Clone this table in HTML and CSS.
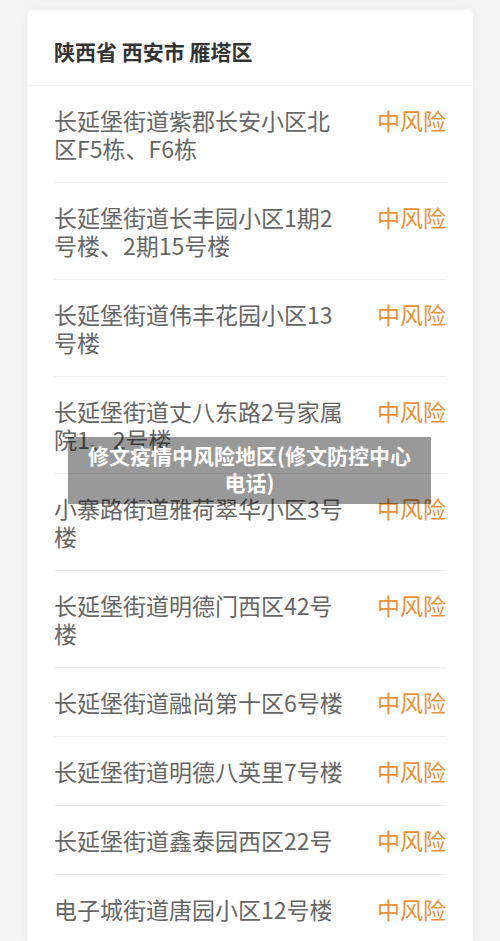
FILE: index.html
```html
<!DOCTYPE html>
<html lang="zh-CN">
<head>
  <meta charset="UTF-8" />
  <meta name="viewport" content="width=device-width, initial-scale=1" />
  <title>修文疫情中风险地区</title>
  <link rel="stylesheet" href="styles.css">
</head>
<body>
  <div class="card">
    <div class="card-head">陕西省 西安市 雁塔区</div>

    <ul class="list">
      <li class="row">
        <span class="place">长延堡街道紫郡长安小区北区F5栋、F6栋</span>
        <span class="risk">中风险</span>
      </li>
      <li class="row">
        <span class="place">长延堡街道长丰园小区1期2号楼、2期15号楼</span>
        <span class="risk">中风险</span>
      </li>
      <li class="row">
        <span class="place">长延堡街道伟丰花园小区13号楼</span>
        <span class="risk">中风险</span>
      </li>
      <li class="row">
        <span class="place">长延堡街道丈八东路2号家属院1、2号楼</span>
        <span class="risk">中风险</span>
      </li>
      <li class="row">
        <span class="place">小寨路街道雅荷翠华小区3号楼</span>
        <span class="risk">中风险</span>
      </li>
      <li class="row">
        <span class="place">长延堡街道明德门西区42号楼</span>
        <span class="risk">中风险</span>
      </li>
      <li class="row">
        <span class="place">长延堡街道融尚第十区6号楼</span>
        <span class="risk">中风险</span>
      </li>
      <li class="row">
        <span class="place">长延堡街道明德八英里7号楼</span>
        <span class="risk">中风险</span>
      </li>
      <li class="row">
        <span class="place">长延堡街道鑫泰园西区22号</span>
        <span class="risk">中风险</span>
      </li>
      <li class="row">
        <span class="place">电子城街道唐园小区12号楼</span>
        <span class="risk">中风险</span>
      </li>
    </ul>
  </div>

  <!-- title over the picture -->
  <div class="caption">修文疫情中风险地区(修文防控中心电话)</div>
</body>
</html>
```

FILE: styles.css
```css
* {
  box-sizing: border-box;
}

body {
  margin: 0;
  background: #f5f5f5;
  padding: 10px 27px 0;
  font-family: "Noto Sans CJK SC", "Noto Sans", sans-serif;
  height: 941px;
  overflow: hidden;
}

.card {
  background: #fff;
  border-radius: 6px;
  box-shadow: 0 0 10px rgba(0, 0, 0, 0.04);
}

.card-head {
  padding: 27px 27px 20px;
  font-size: 21px;
  line-height: 28px;
  font-weight: bold;
  color: #333;
  border-bottom: 1px solid #f4f4f4;
}

.list {
  list-style: none;
  margin: 0;
  padding: 0 27px;
}

.row {
  display: flex;
  justify-content: space-between;
  align-items: flex-start;
  padding: 20px 0;
  border-bottom: 1px solid #f1f1f1;
  font-size: 23px;
  line-height: 28px;
}

.place {
  width: 294px;
  color: #666;
}

.risk {
  color: #eb9138;
  white-space: nowrap;
}

/* gray title band over the list */
.caption {
  position: absolute;
  left: 68px;
  top: 437px;
  width: 363px;
  padding: 5px 12px 8px;
  background: rgba(0, 0, 0, 0.4);
  color: #fff;
  font-size: 21px;
  line-height: 27px;
  font-weight: bold;
  text-align: center;
}
```
